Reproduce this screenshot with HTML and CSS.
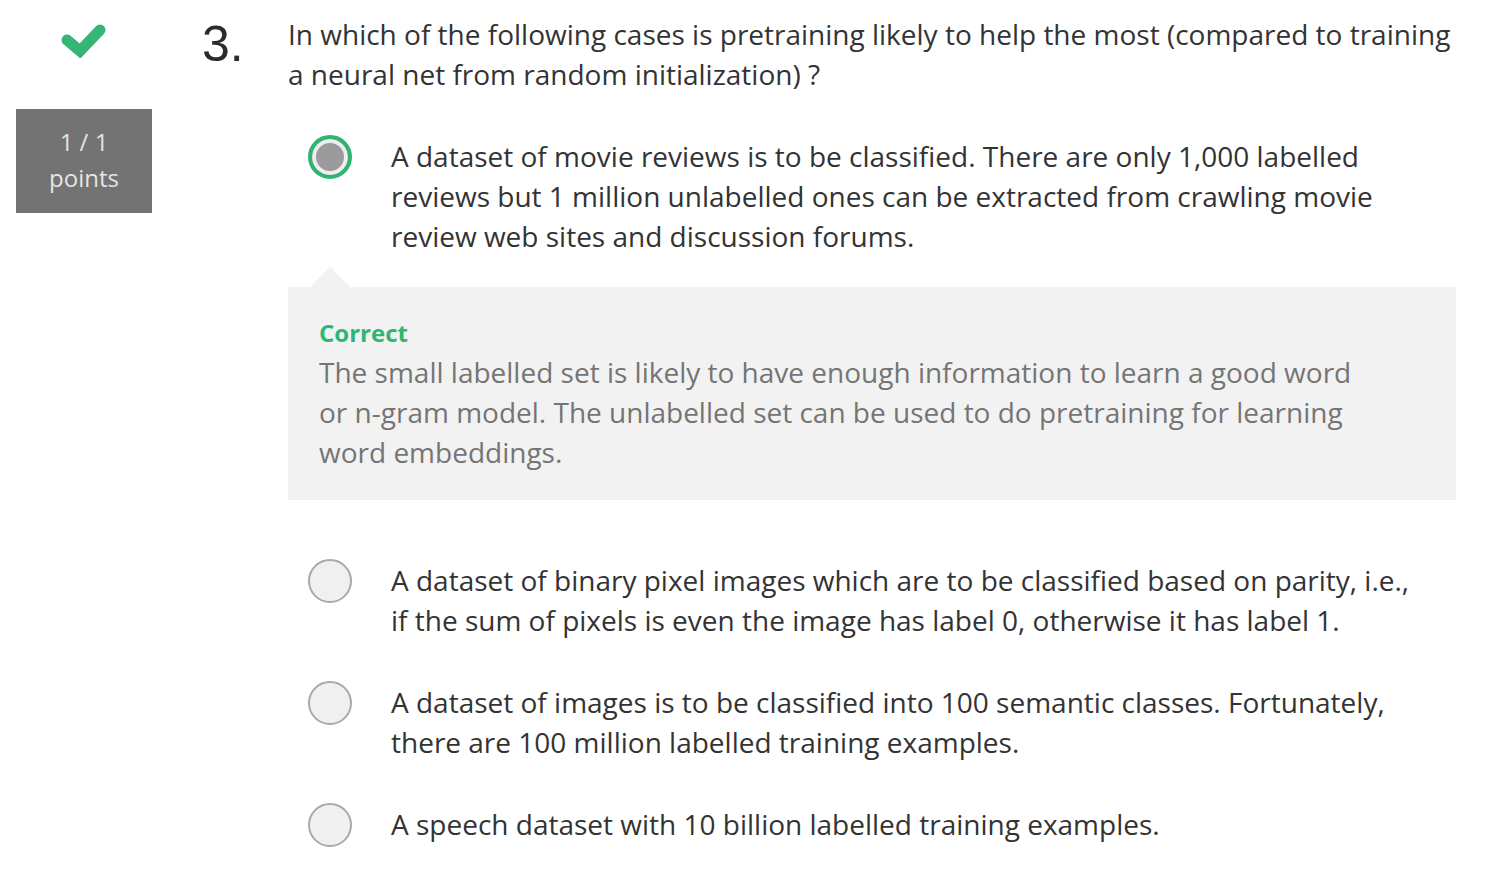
FILE: index.html
```html
<!DOCTYPE html>
<html>
<head>
<meta charset="utf-8">
<link rel="stylesheet" href="styles.css">
</head>
<body>
<div class="question">
  <div class="status">
    <svg class="check" width="46" height="38" viewBox="0 0 46 38">
      <polyline points="7,20 20,31 40,10" fill="none" stroke="#35b674" stroke-width="11" stroke-linecap="round" stroke-linejoin="miter"/>
    </svg>
    <div class="points">1 / 1<br>points</div>
  </div>
  <div class="number">3.</div>
  <div class="content">
    <div class="prompt">In which of the following cases is pretraining likely to help the most (compared to training a neural net from random initialization) ?</div>
    <div class="options">
      <div class="option">
        <span class="radio selected"></span>
        <div class="label">A dataset of movie reviews is to be classified. There are only 1,000 labelled reviews but 1 million unlabelled ones can be extracted from crawling movie review web sites and discussion forums.</div>
      </div>
      <div class="feedback">
        <div class="fb-title">Correct</div>
        <div class="fb-text">The small labelled set is likely to have enough information to learn a good word or n-gram model. The unlabelled set can be used to do pretraining for learning word embeddings.</div>
      </div>
      <div class="option">
        <span class="radio"></span>
        <div class="label">A dataset of binary pixel images which are to be classified based on parity, i.e., if the sum of pixels is even the image has label 0, otherwise it has label 1.</div>
      </div>
      <div class="option">
        <span class="radio"></span>
        <div class="label">A dataset of images is to be classified into 100 semantic classes. Fortunately, there are 100 million labelled training examples.</div>
      </div>
      <div class="option">
        <span class="radio"></span>
        <div class="label">A speech dataset with 10 billion labelled training examples.</div>
      </div>
    </div>
  </div>
</div>
</body>
</html>
```

FILE: styles.css
```css
html, body {
  margin: 0;
  padding: 0;
  background: #ffffff;
}
body {
  font-family: "Open Sans", "Noto Sans", sans-serif;
  color: #333333;
  font-size: 28px;
  line-height: 40px;
}
.question {
  display: flex;
  align-items: flex-start;
}
.status {
  width: 168px;
  flex: none;
  display: flex;
  flex-direction: column;
  align-items: center;
  padding-top: 20px;
}
.check {
  display: block;
  margin-left: -2px;
}
.points {
  margin-top: 51px;
  width: 136px;
  height: 104px;
  box-sizing: border-box;
  padding-top: 15px;
  background: #737373;
  color: #e4e4e4;
  font-size: 24px;
  line-height: 36px;
  text-align: center;
}
.number {
  width: 120px;
  flex: none;
  box-sizing: border-box;
  padding-left: 34px;
  padding-top: 16px;
  font-family: "Liberation Sans", Arial, sans-serif;
  font-size: 50px;
  line-height: 56px;
  color: #2b2b2b;
}
.content {
  width: 1168px;
  flex: none;
  padding-top: 14px;
}
.prompt {
  margin-bottom: 42px;
}
.options {
  display: flex;
  flex-direction: column;
}
.option {
  display: flex;
  align-items: flex-start;
  padding-left: 20px;
  padding-right: 30px;
  margin-bottom: 42px;
}
.option:last-child {
  margin-bottom: 0;
}
.radio {
  flex: none;
  width: 44px;
  height: 44px;
  box-sizing: border-box;
  border-radius: 50%;
  border: 2px solid #a9a9a9;
  background: #f0f0f0;
  margin-top: -1px;
  margin-right: 39px;
}
.radio.selected {
  border: 4px solid #2fb572;
  background: #9b9b9b;
  box-shadow: inset 0 0 0 4px #eeeeee;
}
.label {
  flex: 1;
}
.feedback {
  position: relative;
  margin-top: -11px;
  margin-bottom: 60px;
  background: #f2f2f2;
  padding: 26px 31px 28px 31px;
}
.feedback::before {
  content: "";
  position: absolute;
  left: 22px;
  top: -20px;
  border-left: 20px solid transparent;
  border-right: 20px solid transparent;
  border-bottom: 20px solid #f2f2f2;
}
.fb-title {
  color: #2fb672;
  font-weight: 700;
  font-size: 24px;
  line-height: 39px;
}
.fb-text {
  color: #757575;
  max-width: 1050px;
}
```
